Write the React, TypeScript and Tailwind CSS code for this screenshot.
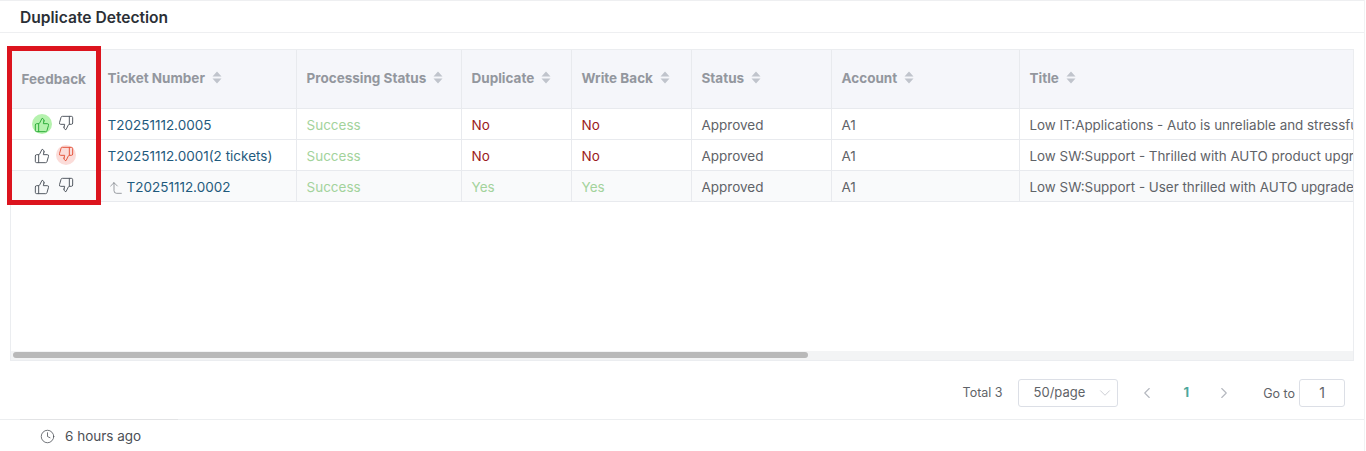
import { ThumbsDown, ThumbsUp, Clock, ChevronLeft, ChevronRight, ChevronDown, CornerLeftUp } from "lucide-react";

const columns = [
  { label: "Ticket Number", width: "w-[199px]" },
  { label: "Processing Status", width: "w-[165px]" },
  { label: "Duplicate", width: "w-[110px]" },
  { label: "Write Back", width: "w-[120px]" },
  { label: "Status", width: "w-[140px]" },
  { label: "Account", width: "w-[188px]" },
  { label: "Title", width: "w-[600px]" },
];

const rows = [
  {
    ticket: "T20251112.0005",
    duplicate: false,
    writeBack: false,
    title: "Low IT:Applications - Auto is unreliable and stressful for daily work",
    feedback: "up",
  },
  {
    ticket: "T20251112.0001(2 tickets)",
    duplicate: false,
    writeBack: false,
    title: "Low SW:Support - Thrilled with AUTO product upgrade and new features",
    feedback: "down",
  },
  {
    ticket: "T20251112.0002",
    child: true,
    duplicate: true,
    writeBack: true,
    title: "Low SW:Support - User thrilled with AUTO upgrade and new features",
    feedback: "",
  },
];

const cell = "border-r border-b border-[#e8eaee] px-[10px] pt-[4px]";

const SortIcon = () => (
  <svg width="10" height="13" viewBox="0 0 10 13" className="ml-[7px] shrink-0">
    <path d="M5 0.5 L9.5 5.5 H0.5 Z M5 12.5 L0.5 7.5 H9.5 Z" fill="#c0c4cc" />
  </svg>
);

const YesNo = ({ value }: { value: boolean }) => (
  <span className={value ? "text-[#a3d39c]" : "text-[#9b1c1c]"}>{value ? "Yes" : "No"}</span>
);

const Feedback = ({ value }: { value: string }) => (
  <div className="flex items-center justify-center gap-1">
    <span
      className={`flex h-5 w-5 items-center justify-center rounded-full ${
        value === "up" ? "bg-[#b5f2ae] text-[#2fae3c]" : "text-[#555b63]"
      }`}
    >
      <ThumbsUp size={16} strokeWidth={1.5} className="translate-y-[1px]" />
    </span>
    <span
      className={`flex h-5 w-5 items-center justify-center rounded-full ${
        value === "down" ? "bg-[#fbdcd9] text-[#e4573f]" : "text-[#555b63]"
      }`}
    >
      <ThumbsDown size={16} strokeWidth={1.5} className="-translate-y-[1px]" />
    </span>
  </div>
);

export default function App() {
  return (
    <div className="relative h-[451px] w-[1366px] overflow-hidden bg-white font-['Inter',sans-serif] text-[13.5px] text-[#5f6368]">
      <div className="h-full w-[1365px] border-r border-[#f1f2f3]">
        <div className="flex h-[33px] items-center border-y border-[#eeeff1] pt-[3px] pl-5 text-[15.6px] font-semibold text-[#2b2f36]">
          Duplicate Detection
        </div>

        <div className="px-[10px] pt-4">
          <div className="relative h-[312px] overflow-hidden border border-[#ebedf0]">
            <table className="w-[1608px] table-fixed border-collapse">
              <thead>
                <tr className="h-[58px] bg-[#f5f6fa] text-left text-[#93979e]">
                  <th className="w-[86px] border-r border-b border-[#e8eaee] text-center font-bold">
                    Feedback
                  </th>
                  {columns.map((c) => (
                    <th key={c.label} className={`${c.width} border-r border-b border-[#e8eaee] px-[10px] pb-[2px] font-bold`}>
                      <div className="flex items-center">
                        {c.label}
                        <SortIcon />
                      </div>
                    </th>
                  ))}
                </tr>
              </thead>
              <tbody>
                {rows.map((r, i) => (
                  <tr key={r.ticket} className={`h-[31px] ${i === 2 ? "bg-[#f9fafb]" : "bg-white"}`}>
                    <td className="border-r border-b border-[#e8eaee]">
                      <Feedback value={r.feedback} />
                    </td>
                    <td className={`${cell} text-[#1f5a7d]`}>
                      <div className="flex items-center">
                        {r.child && <CornerLeftUp size={16} strokeWidth={1} className="mr-[3px] text-[#6b7077]" />}
                        {r.ticket}
                      </div>
                    </td>
                    <td className={`${cell} text-[#a3d39c]`}>Success</td>
                    <td className={cell}>
                      <YesNo value={r.duplicate} />
                    </td>
                    <td className={cell}>
                      <YesNo value={r.writeBack} />
                    </td>
                    <td className={cell}>Approved</td>
                    <td className={cell}>A1</td>
                    <td className="border-b border-[#e8eaee] px-[10px] pt-[4px] text-[13.4px] whitespace-nowrap">
                      {r.title}
                    </td>
                  </tr>
                ))}
              </tbody>
            </table>
            <div className="absolute right-0 bottom-0 left-0 h-[9px] bg-[#f3f4f5]">
              <div className="mt-[1px] ml-[2px] h-[6px] w-[795px] rounded-full bg-[#b9b9b9]" />
            </div>
          </div>
        </div>

        <div className="flex h-[58px] items-center justify-end pt-[6px] pr-[19px] text-[13px]">
          <span className="text-[12.5px]">Total 3</span>
          <div className="ml-[15px] flex h-[28px] w-[100px] items-center justify-between rounded-[3px] border border-[#dcdfe6] pr-[3px] pl-[15px]">
            50/page
            <ChevronDown size={18} strokeWidth={0.9} className="text-[#b4b8bf]" />
          </div>
          <ChevronLeft size={18} strokeWidth={1.5} className="ml-5 text-[#b4b8bf]" />
          <span className="ml-[28px] font-bold text-[#4da79b]">1</span>
          <ChevronRight size={18} strokeWidth={1.5} className="ml-[26px] text-[#b4b8bf]" />
          <span className="ml-[30px] pt-[2px] text-[12.5px]">Go to</span>
          <div className="ml-1 flex h-[28px] w-[46px] items-center justify-center rounded-[3px] border border-[#dcdfe6] text-sm">
            1
          </div>
        </div>

        <div className="relative flex h-[32px] items-center border-t border-[#eceef0] pt-[2px] pl-[40px] text-[13.5px] text-[#4c5056]">
          <span className="absolute -top-px left-5 h-px w-[158px] bg-[#e2e3e5]" />
          <Clock size={15} strokeWidth={1.25} />
          <span className="ml-[10px]">6 hours ago</span>
        </div>
      </div>

      <div className="absolute top-[46px] left-[7px] h-[159px] w-[94px] border-[5px] border-[#dc141e]" />
    </div>
  );
}
